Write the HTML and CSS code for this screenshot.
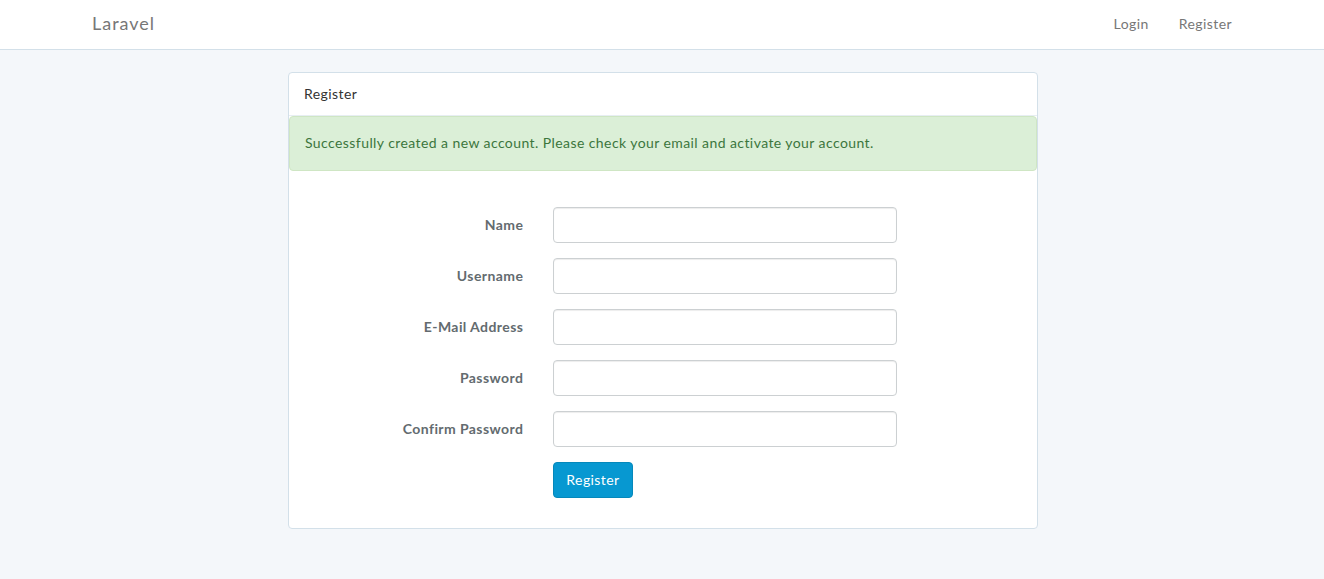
FILE: index.html
```html
<!DOCTYPE html>
<html lang="en">
<head>
<meta charset="utf-8">
<title>Laravel</title>
<link rel="stylesheet" href="styles.css">
</head>
<body>
<nav class="navbar">
  <div class="container nav-inner">
    <a class="brand" href="#">Laravel</a>
    <ul class="nav-right">
      <li><a href="#">Login</a></li>
      <li><a href="#">Register</a></li>
    </ul>
  </div>
</nav>
<div class="container">
  <div class="panel">
    <div class="panel-heading">Register</div>
    <div class="alert">Successfully created a new account. Please check your email and activate your account.</div>
    <div class="panel-body">
      <form class="form">
        <div class="form-group">
          <label class="control-label">Name</label>
          <div class="field"><input class="form-control" type="text"></div>
        </div>
        <div class="form-group">
          <label class="control-label">Username</label>
          <div class="field"><input class="form-control" type="text"></div>
        </div>
        <div class="form-group">
          <label class="control-label">E-Mail Address</label>
          <div class="field"><input class="form-control" type="email"></div>
        </div>
        <div class="form-group">
          <label class="control-label">Password</label>
          <div class="field"><input class="form-control" type="password"></div>
        </div>
        <div class="form-group">
          <label class="control-label">Confirm Password</label>
          <div class="field"><input class="form-control" type="password"></div>
        </div>
        <div class="form-group">
          <span class="control-label"></span>
          <div class="field"><button class="btn" type="button">Register</button></div>
        </div>
      </form>
    </div>
  </div>
</div>
</body>
</html>
```
FILE: styles.css
```css
* { box-sizing: border-box; }
html, body { margin: 0; padding: 0; }
body {
  background: #f4f7fa;
  font-family: "Lato", "Open Sans", sans-serif;
  font-size: 14px;
  line-height: 1.6;
  letter-spacing: 0.03em;
  color: #636b6f;
}
a { text-decoration: none; }
.container {
  width: 1170px;
  margin: 0 auto;
  padding: 0 15px;
}
.navbar {
  background: #fff;
  border-bottom: 1px solid #d3e0e9;
  height: 50px;
  margin-bottom: 22px;
}
.nav-inner {
  display: flex;
  justify-content: space-between;
  align-items: flex-start;
  height: 49px;
}
.brand {
  font-size: 18px;
  color: #777;
  line-height: 20px;
  letter-spacing: 0.055em;
  padding-top: 13px;
}
.nav-right {
  list-style: none;
  margin: 0 -15px 0 0;
  padding: 0;
  display: flex;
}
.nav-right a {
  display: block;
  padding: 13px 15px;
  color: #777;
  line-height: 22px;
}
.panel {
  width: 750px;
  margin: 0 0 0 196px;
  background: #fff;
  border: 1px solid #d3e0e9;
  border-radius: 4px;
}
.panel-heading {
  padding: 10px 15px;
  border-bottom: 1px solid #e7eef3;
  color: #333;
  border-radius: 3px 3px 0 0;
}
.alert {
  background: #dbefd7;
  border: 1px solid #cfe6c4;
  border-radius: 4px;
  color: #3c763d;
  padding: 15px;
  margin-bottom: 21px;
}
.panel-body {
  padding: 15px;
}
.form-group {
  display: flex;
  margin: 0 -15px 15px;
}
.control-label {
  width: 249.33px;
  padding: 7px 15px 0;
  text-align: right;
  font-weight: bold;
  color: #636b6f;
}
.field {
  width: 374px;
  padding: 0 15px;
}
.form-control {
  display: block;
  width: 100%;
  height: 36px;
  padding: 6px 12px;
  font: inherit;
  color: #555;
  background: #fff;
  border: 1px solid #ccd0d2;
  border-radius: 4px;
  box-shadow: inset 0 1px 1px rgba(0,0,0,0.075);
}
.btn {
  font: inherit;
  line-height: 1.6;
  letter-spacing: 0.03em;
  padding: 6px 12px;
  color: #fff;
  background: #0798d1;
  border: 1px solid #0588bb;
  border-radius: 4px;
  cursor: pointer;
}
```
